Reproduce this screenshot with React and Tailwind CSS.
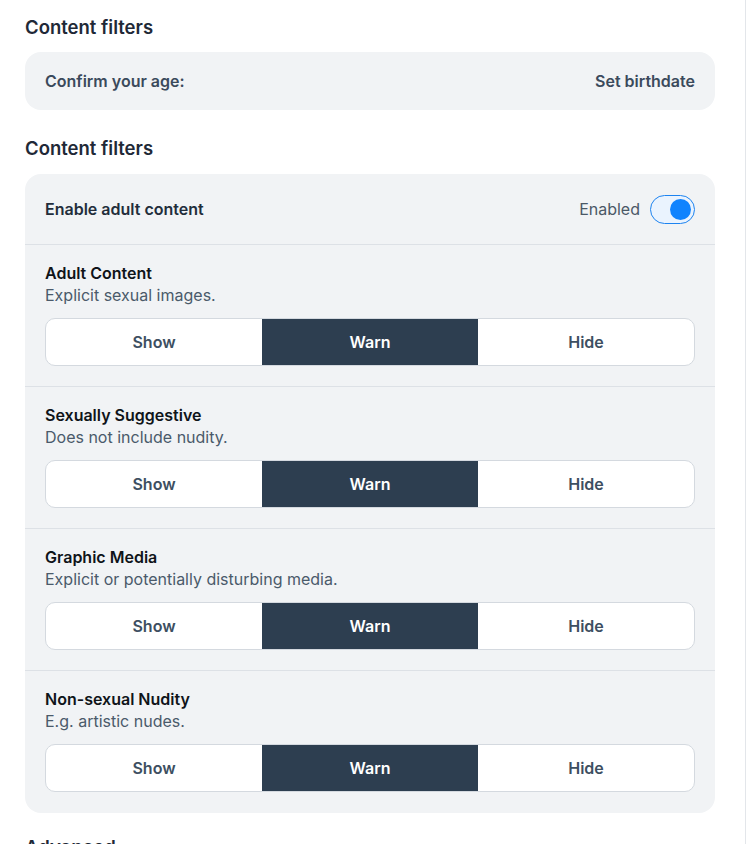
const filters = [
  { title: "Adult Content", desc: "Explicit sexual images." },
  { title: "Sexually Suggestive", desc: "Does not include nudity." },
  { title: "Graphic Media", desc: "Explicit or potentially disturbing media." },
  { title: "Non-sexual Nudity", desc: "E.g. artistic nudes." },
];

function Segmented() {
  return (
    <div className="flex h-12 rounded-[10px] border border-[#d4d9df] bg-white overflow-hidden">
      <div className="flex-1 flex items-center justify-center text-base font-semibold text-[#3d4f61]">Show</div>
      <div className="flex-1 flex items-center justify-center text-base font-semibold text-white bg-[#2d3e50]">Warn</div>
      <div className="flex-1 flex items-center justify-center text-base font-semibold text-[#3d4f61]">Hide</div>
    </div>
  );
}

export default function App() {
  return (
    <div className="w-[746px] min-h-[844px] bg-white border-r border-[#e3e6ea] overflow-hidden" style={{ fontFamily: "Inter, 'Noto Sans', sans-serif" }}>
      <div className="w-[690px] ml-[25px] pt-[13px]">
        <h2 className="text-[18.5px] leading-7 font-semibold text-[#1f2937] mb-[11px]">Content filters</h2>
        <div className="rounded-2xl bg-[#f1f3f5] px-5 py-[18px] flex justify-between items-center text-base leading-[22px] font-semibold text-[#3b4a5c]">
          <span>Confirm your age:</span>
          <span>Set birthdate</span>
        </div>

        <h2 className="text-[18.5px] leading-7 font-semibold text-[#1f2937] mt-6 mb-3">Content filters</h2>
        <div className="rounded-2xl bg-[#f1f3f5]">
          <div className="h-[71px] px-5 flex items-center justify-between border-b border-[#dde1e6]">
            <span className="text-base font-semibold text-[#222d3b]">Enable adult content</span>
            <div className="flex items-center gap-[10px]">
              <span className="text-base text-[#4b5866]">Enabled</span>
              <div className="w-[45px] h-[29px] rounded-full border border-[#1d83f0] bg-[#eaf3fe] flex items-center justify-end pr-[3px]">
                <div className="w-[21px] h-[21px] rounded-full bg-[#1083fe]" />
              </div>
            </div>
          </div>
          {filters.map((f, i) => (
            <div key={f.title} className={i < filters.length - 1 ? "px-5 pt-[17px] pb-5 border-b border-[#dde1e6]" : "px-5 pt-[17px] pb-[21px]"}>
              <div className="text-base leading-[22px] font-semibold text-[#0f1419]">{f.title}</div>
              <div className="text-base leading-[22px] text-[#4a5a6a] mb-3">{f.desc}</div>
              <Segmented />
            </div>
          ))}
        </div>

        <h2 className="text-[18.5px] leading-7 font-semibold text-[#1f2937] mt-5">Advanced</h2>
      </div>
    </div>
  );
}
